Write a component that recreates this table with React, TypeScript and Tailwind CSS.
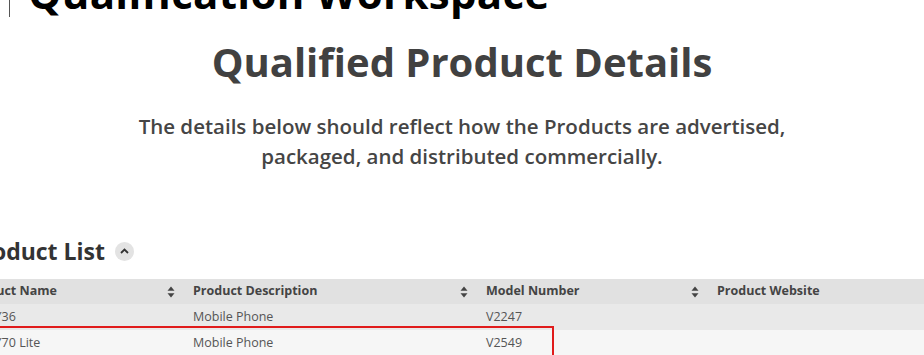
import React from 'react';

const SortIcon = () => (
  <svg width="8" height="12" viewBox="0 0 8 12" className="shrink-0">
    <path d="M4 0.5 L7.5 4.8 H0.5 Z" fill="#444" />
    <path d="M4 11.5 L7.5 7.2 H0.5 Z" fill="#444" />
  </svg>
);

const columns = [
  { label: 'Product Name', width: 'w-[226px]', sort: true },
  { label: 'Product Description', width: 'w-[293px]', sort: true },
  { label: 'Model Number', width: 'w-[231px]', sort: true },
  { label: 'Product Website', width: 'flex-1', sort: false },
];

const rows = [
  { name: 'Vivo Y36', desc: 'Mobile Phone', model: 'V2247', site: '', bg: 'bg-[#e9e9e9]' },
  { name: 'Vivo Y70 Lite', desc: 'Mobile Phone', model: 'V2549', site: '', bg: 'bg-[#f6f6f6]' },
];

const App = () => {
  return (
    <main
      className="relative w-[924px] h-[355px] overflow-hidden bg-white"
      style={{ fontFamily: '"Open Sans", "Noto Sans", sans-serif' }}
    >
      {/* 페이지 상단 제목 (위쪽이 잘려 있음) */}
      <header className="-mt-[26px] ml-[9px] border-l border-[#555] pl-[18px] h-[43px]">
        <h1 className="text-[42px] leading-[38px] font-bold text-black tracking-[0.3px]">
          Qualification Workspace
        </h1>
      </header>

      <section className="mt-[22px] text-center">
        <h2 className="text-[40px] leading-[46px] font-bold text-[#414141]">Qualified Product Details</h2>
        <p className="mt-[26px] text-[20.5px] leading-[30px] font-semibold text-[#454545]">
          The details below should reflect how the Products are advertised,
          <br />
          packaged, and distributed commercially.
        </p>
      </section>

      {/* 제품 목록 */}
      <section className="-ml-[43px] mt-[65px] w-[967px]">
        <div className="flex items-center gap-[10px] pl-[10px] h-[30px]">
          <h3 className="text-[23px] font-bold text-[#333]">Product List</h3>
          <span className="flex items-center justify-center w-[19px] h-[19px] rounded-full bg-[#e3e3e3]">
            <svg width="9" height="6" viewBox="0 0 9 6">
              <path d="M1 5 L4.5 1.5 L8 5" fill="none" stroke="#333" strokeWidth="1.8" />
            </svg>
          </span>
        </div>

        <div className="mt-[13px]">
          <div className="flex h-[25px] bg-[#e1e1e1]">
            {columns.map((col) => (
              <div
                key={col.label}
                className={`${col.width} flex items-center justify-between pl-[10px] pr-[8px]`}
              >
                <span className="text-[12.5px] font-bold text-[#444]">{col.label}</span>
                {col.sort && <SortIcon />}
              </div>
            ))}
          </div>
          {rows.map((row) => (
            <div key={row.model} className={`flex h-[26px] ${row.bg}`}>
              <div className="w-[226px] flex items-center pl-[10px] text-[12.5px] text-[#555]">{row.name}</div>
              <div className="w-[293px] flex items-center pl-[10px] text-[12.5px] text-[#555]">{row.desc}</div>
              <div className="w-[231px] flex items-center pl-[10px] text-[12.5px] text-[#555]">{row.model}</div>
              <div className="flex-1 flex items-center pl-[10px] text-[12.5px] text-[#555]">{row.site}</div>
            </div>
          ))}
        </div>
      </section>

      {/* 빨간 강조 표시 */}
      <div className="absolute left-[-10px] top-[326px] w-[564px] h-[60px] border-2 border-[#e01b1b] pointer-events-none" />
    </main>
  );
};

export default App;
